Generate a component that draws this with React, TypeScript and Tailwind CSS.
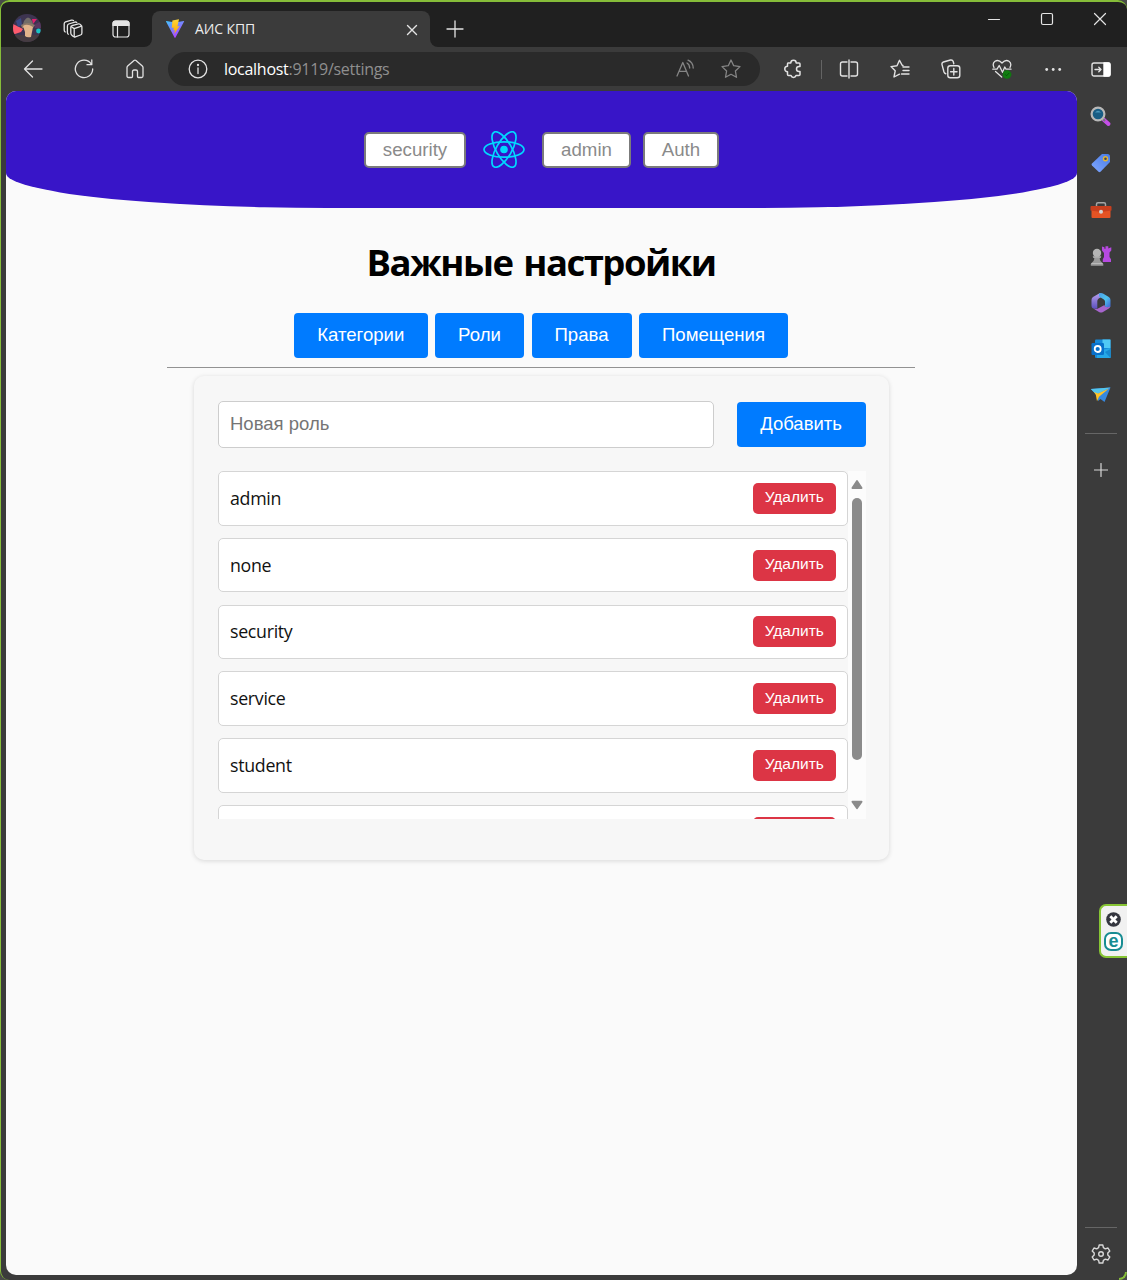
import React from "react";

type IconProps = { children: React.ReactNode; w?: number; h?: number; className?: string; sw?: number };

function Icon({ children, w = 20, h = 20, className = "", sw = 1.2 }: IconProps) {
  return (
    <svg
      width={w}
      height={h}
      viewBox={`0 0 ${w} ${h}`}
      fill="none"
      stroke="currentColor"
      strokeWidth={sw}
      strokeLinecap="round"
      strokeLinejoin="round"
      className={`block shrink-0 ${className}`}
    >
      {children}
    </svg>
  );
}

function Slot({ children }: { children: React.ReactNode }) {
  return <div className="flex h-11 w-[51px] shrink-0 items-center justify-center">{children}</div>;
}

function Avatar() {
  return (
    <svg width="28" height="28" viewBox="0 0 28 28" className="block shrink-0">
      <defs>
        <clipPath id="avatar">
          <circle cx="14" cy="14" r="14" />
        </clipPath>
      </defs>
      <g clipPath="url(#avatar)">
        <rect width="28" height="28" fill="#3d3450" />
        <path d="M0 10L10 15L8 18L2 20L0 20Z" fill="#ff5b6e" />
        <path d="M3 7L8 4L9 11L5 13Z" fill="#3b4a86" />
        <path d="M19 5L24 5L20 10Z" fill="#e0236f" />
        <path d="M21 11L28 7V14L22 14Z" fill="#5a3760" />
        <circle cx="25.5" cy="17" r="2.4" fill="#19c3c5" />
        <path d="M0 21H28V28H0Z" fill="#463c42" />
        <path d="M11 7Q15 0 19 7L21 13H9Z" fill="#716c68" />
        <path d="M8 11Q15 7 22 11L20 14H9Z" fill="#8b7868" />
        <path d="M10 12Q14 9 20 13L19 18L18 23Q14 24 12 22L12 18Z" fill="#e2b58c" />
      </g>
    </svg>
  );
}

function ViteLogo() {
  return (
    <svg width="20" height="20" viewBox="0 0 20 20" className="block shrink-0">
      <defs>
        <linearGradient id="va" x1="0" y1="0" x2="0.6" y2="1">
          <stop offset="0" stopColor="#41c6ff" />
          <stop offset="1" stopColor="#b43cff" />
        </linearGradient>
        <linearGradient id="vb" x1="0" y1="0" x2="0" y2="1">
          <stop offset="0" stopColor="#ffd83a" />
          <stop offset="1" stopColor="#ffa400" />
        </linearGradient>
      </defs>
      <path d="M1 2.5Q.8 2 1.4 2L10 3.6L18.8 2Q19.4 2 19.1 2.6L10.5 18.6Q10 19.3 9.5 18.6Z" fill="url(#va)" />
      <path d="M14 .3L7.4 1.5L6.8 9L8.8 8.6L8.3 11.3L9.9 10.9L9.2 15L14.6 7L12.4 7.4L14 .3Z" fill="url(#vb)" />
    </svg>
  );
}

function ReactLogo() {
  return (
    <svg width="42" height="37" viewBox="-21 -18.5 42 37" fill="none" stroke="#00d8ff" strokeWidth="1.7" className="block shrink-0">
      <circle r="3.8" fill="#00d8ff" stroke="none" />
      <ellipse rx="20" ry="7.7" />
      <ellipse rx="20" ry="7.7" transform="rotate(60)" />
      <ellipse rx="20" ry="7.7" transform="rotate(120)" />
    </svg>
  );
}

function TabStrip() {
  return (
    <div className="flex h-[47px] bg-[#202020] pt-[11px] text-[#e4e4e4]">
      <div className="shrink-0 bg-[#3b3b3b]">
        <div className="flex h-9 w-[152px] rounded-br-lg bg-[#202020] pl-[13px]">
          <div className="mt-[3px] flex h-[28px] items-center">
            <Avatar />
            <Icon className="ml-[22px] mt-px" sw={1.3}>
              <path d="M7.8 8.4Q7.8 7 9 6.7L15.5 4.9Q16.5 4.7 17.2 5.4L18.3 6.5Q18.9 7 18.9 8V14Q18.9 15.6 17.5 16L12.3 17.9Q11.2 18.3 10.3 17.4L8.6 15.9Q7.8 15.2 7.8 14Z" />
              <path d="M8.4 7.8L11.2 9.6L18.4 7.2M11.2 9.6V17.8" />
              <path d="M5.3 15.2Q4.4 14.6 4.4 13.2V7Q4.4 5.5 5.7 5L11.8 3.1Q13 2.8 13.8 3.4" />
              <path d="M2.2 13Q1.2 12.3 1.2 11V4.8Q1.2 3.4 2.5 2.9L8.5 1.2Q9.7 .9 10.5 1.5" />
            </Icon>
            <Icon w={18} h={18} className="ml-[29px] mt-[2px]">
              <rect x="1" y="1" width="16" height="16" rx="2.5" />
              <path d="M1 3.5Q1 1 3.5 1H14.5Q17 1 17 3.5V5.5H1Z" fill="currentColor" />
              <path d="M5.5 6V17" />
            </Icon>
          </div>
        </div>
      </div>
      <div className="flex h-9 w-[278px] items-center rounded-t-lg bg-[#3b3b3b] pb-px pl-[13px] pr-3">
        <ViteLogo />
        <span className="-mt-px ml-[10px] font-['Open_Sans',sans-serif] text-[14px] tracking-[-0.1px] text-[#ececec]">АИС КПП</span>
        <Icon w={12} h={12} sw={1.4} className="ml-auto mt-[2px]">
          <path d="M1.5 1.5L10.5 10.5M10.5 1.5L1.5 10.5" />
        </Icon>
      </div>
      <div className="flex flex-1 bg-[linear-gradient(to_bottom,#202020_50%,#3b3b3b_50%)]">
        <div className="flex flex-1 rounded-bl-lg bg-[#202020]">
          <Icon w={18} h={18} sw={1.3} className="ml-4 mt-[9px]">
            <path d="M9 1V17M1 9H17" />
          </Icon>
          <div className="-mt-1 ml-auto flex h-6 items-center">
            <Icon w={14} h={14} sw={1.2} className="mr-[39px]">
              <path d="M1.5 7.5H12.5" />
            </Icon>
            <Icon w={14} h={14} sw={1.2} className="mr-[39px]">
              <rect x="1.5" y="1.5" width="11" height="11" rx="1.5" />
            </Icon>
            <Icon w={14} h={14} sw={1.2} className="mr-5">
              <path d="M1.5 1.5L12.5 12.5M12.5 1.5L1.5 12.5" />
            </Icon>
          </div>
        </div>
      </div>
    </div>
  );
}

function Toolbar() {
  return (
    <div className="flex h-11 items-center bg-[#3b3b3b] pl-[7px] text-[#e2e2e2]">
      <Slot>
        <Icon sw={1.3}><path d="M19 10H1.5M9.5 2L1.5 10L9.5 18" /></Icon>
      </Slot>
      <Slot>
        <Icon sw={1.3}><path d="M17.2 5A8.7 8.7 0 1 0 18.7 10M17.8 1V5.7H13" /></Icon>
      </Slot>
      <Slot>
        <Icon sw={1.3}>
          <path d="M2 8.5Q2 7.7 2.7 7L9 1.5Q10 .8 11 1.5L17.3 7Q18 7.7 18 8.5V17Q18 18.5 16.5 18.5H13.5Q12.5 18.5 12.5 17.5V12.5Q12.5 11 11 11H9Q7.5 11 7.5 12.5V17.5Q7.5 18.5 6.5 18.5H3.5Q2 18.5 2 17Z" />
        </Icon>
      </Slot>
      <div className="ml-2 flex h-[34px] w-[592px] shrink-0 items-center rounded-full bg-[#2a2a2a] pl-5">
        <Icon sw={1.3}>
          <circle cx="10" cy="10" r="8.8" />
          <path d="M10 9V14.5" /><circle cx="10" cy="6" r=".5" fill="currentColor" />
        </Icon>
        <span className="ml-4 font-['Open_Sans',sans-serif] text-[16px] tracking-[-0.28px] text-[#8f8f8f]">
          <span className="text-white">localhost</span>:9119/settings
        </span>
        <Icon className="ml-auto text-[#858585]" sw={1.3}>
          <path d="M2 17L7.8 3.5L13.5 17M4 12.3H11.5" />
          <path d="M12 4Q14.5 5.3 14.7 9M13 1.2Q18 3.2 18.2 9" />
        </Icon>
        <Icon className="ml-[26px] mr-[19px] text-[#858585]" sw={1.3}>
          <path d="M10 1L12.7 6.7L19 7.6L14.4 12L15.5 18.3L10 15.3L4.5 18.3L5.6 12L1 7.6L7.3 6.7Z" />
        </Icon>
      </div>
      <div className="ml-[7px] flex">
        <Slot>
          <Icon sw={1.5}>
            <path d="M5 4H7.8A2.7 2.7 0 0 1 13.2 4H16Q17 4 17 5V7.5H16A2.5 2.5 0 0 0 16 12.5H17V15.5Q17 16.5 16 16.5H13A2.6 2.6 0 0 1 8 16.5H5.5Q4.5 16.5 4.5 15.5V12.8A2.7 2.7 0 0 1 4.5 7.3V5Q4.5 4 5 4Z" />
          </Icon>
        </Slot>
        <div className="mt-[13px] h-[19px] w-[5px] pl-[3px]"><div className="h-full w-px bg-[#646464]" /></div>
        <Slot>
          <Icon sw={1.4}>
            <path d="M8 3H3.5Q1.5 3 1.5 5V15Q1.5 17 3.5 17H8M12 3H16.5Q18.5 3 18.5 5V15Q18.5 17 16.5 17H12M10 1V19" />
          </Icon>
        </Slot>
        <Slot>
          <Icon sw={1.4}>
            <path d="M13 6.5H12.3L9.5 1.3L7 6.8L1 7.6L5.2 11.8L4 18L9.5 15.2M13 8H19M13 11.5H19M11.5 15H19" />
          </Icon>
        </Slot>
        <Slot>
          <Icon sw={1.4}>
            <rect x="6.8" y="6.8" width="12" height="12" rx="2.5" />
            <path d="M12.8 9.5V16M9.6 12.8H16M4.8 14.7Q3.5 14.4 3 13L1 5.6Q.6 3.6 2.4 3L9.5 1Q11.6.6 12.2 2.5L12.8 4.7" />
          </Icon>
        </Slot>
        <Slot>
          <Icon sw={1.3}>
            <path d="M2 8.5Q0 4.5 3 2.2Q6.5.2 10 4Q13.5.2 17 2.2Q20 4.5 18 8.5" />
            <path d="M.8 10.2H5L7.2 6.5L10.5 13.3L12.8 8L14 10.2H19M3.5 12.5L9.7 18" />
            <circle cx="15" cy="15.5" r="4" fill="#107c10" stroke="#107c10" strokeWidth=".6" />
            <path d="M13.2 15.5L14.5 16.8L17 14.2" stroke="#064f08" strokeWidth=".8" />
          </Icon>
        </Slot>
        <Slot>
          <Icon>
            <g fill="currentColor" stroke="none">
              <circle cx="3.7" cy="10.5" r="1.4" /><circle cx="10.2" cy="10.5" r="1.4" /><circle cx="16.7" cy="10.5" r="1.4" />
            </g>
          </Icon>
        </Slot>
        <div className="flex h-11 w-[46px] items-center justify-center">
          <Icon sw={1.4}>
            <rect x="1" y="4" width="18" height="13" rx="2" />
            <path d="M13 4H17.5Q19 4 19 5.5V15.5Q19 17 17.5 17H13Z" fill="#fff" stroke="#fff" />
            <path d="M4 10.5H10M7.8 8.3L10 10.5L7.8 12.7" />
          </Icon>
        </div>
      </div>
    </div>
  );
}

function PageHeader() {
  return (
    <header className="flex h-[117px] items-center justify-center rounded-b-[30%] bg-[#3815c8] pl-px font-['Liberation_Sans',sans-serif] text-[18.7px] text-[#8a8a8a]">
      <button className="h-9 w-[102px] rounded-[5px] border-2 border-[#7b7b7b] bg-white leading-[30px]">security</button>
      <div className="mx-[17px]"><ReactLogo /></div>
      <button className="h-9 w-[89px] rounded-[5px] border-2 border-[#7b7b7b] bg-white leading-[30px]">admin</button>
      <button className="ml-3 h-9 w-[76px] rounded-[5px] border-2 border-[#7b7b7b] bg-white leading-[30px]">Auth</button>
    </header>
  );
}

const roles = ["admin", "none", "security", "service", "student", ""];

function Roles() {
  return (
    <section className="ml-[188.5px] mt-2 h-[484px] w-[695px] rounded-[10px] bg-[#f7f7f7] px-[23.5px] pt-[25px] shadow-[0_1px_5px_rgba(0,0,0,0.14)]">
      <div className="flex items-center font-['Liberation_Sans',sans-serif] text-[18.5px]">
        <input
          placeholder="Новая роль"
          className="h-[47px] w-[496.5px] rounded-[5px] border border-[#cdcdcd] bg-white px-[11.5px] pb-[2px] placeholder:text-[#757575]"
        />
        <button className="ml-[23px] h-[45px] w-[129px] rounded-[4px] bg-[#007bff] pb-[2px] text-white">Добавить</button>
      </div>
      <div className="mt-[23px] flex h-[348px] overflow-hidden">
        <ul className="w-[630.5px] shrink-0">
          {roles.map((role, i) => (
            <li key={i} className="mb-[12.25px] flex h-[54.5px] items-center justify-between rounded-[5px] border border-[#d5d5d5] bg-white px-[11.5px]">
              <span className="font-['Open_Sans',sans-serif] text-[17.8px] tracking-[-0.3px] text-[#111]">{role}</span>
              <button className="h-[31px] w-[82.5px] rounded-[5px] bg-[#dc3545] pb-[2px] font-['Liberation_Sans',sans-serif] text-[15.5px] leading-5 text-white">
                {role && "Удалить"}
              </button>
            </li>
          ))}
        </ul>
        <div className="flex w-[18px] flex-col items-center bg-[#fcfcfc] pt-2">
          <svg width="12" height="10" viewBox="0 0 12 10" className="shrink-0"><path d="M6 2L10.6 9H1.4Z" fill="#8b8b8b" stroke="#8b8b8b" strokeWidth="1.8" strokeLinejoin="round" /></svg>
          <div className="mt-[9px] h-[262px] w-[10px] shrink-0 rounded-full bg-[#8b8b8b]" />
          <svg width="12" height="10" viewBox="0 0 12 10" className="mt-[40px] shrink-0"><path d="M6 8.3L10.6 1.7H1.4Z" fill="#8b8b8b" stroke="#8b8b8b" strokeWidth="1.8" strokeLinejoin="round" /></svg>
        </div>
      </div>
    </section>
  );
}

function SettingsPage() {
  return (
    <main className="h-[1184px] w-[1071px] overflow-hidden rounded-[10px] bg-[#fafafa]">
      <PageHeader />
      <h1 className="mt-[28px] h-[53px] text-center font-['Open_Sans',sans-serif] text-[36.5px] font-bold leading-[52px] tracking-[-1.55px] text-black [word-spacing:3px]">Важные настройки</h1>
      <nav className="mt-[24px] flex justify-center gap-[7.5px] pb-[9px] font-['Liberation_Sans',sans-serif] text-[18.6px] text-white">
        <button className="h-[45px] w-[133.5px] rounded-[4px] bg-[#007bff] pb-[2px]">Категории</button>
        <button className="h-[45px] w-[89px] rounded-[4px] bg-[#007bff] pb-[2px]">Роли</button>
        <button className="h-[45px] w-[100px] rounded-[4px] bg-[#007bff] pb-[2px]">Права</button>
        <button className="h-[45px] w-[149px] rounded-[4px] bg-[#007bff] pb-[2px]">Помещения</button>
      </nav>
      <hr className="ml-[161.5px] w-[748px] border-[#929292]" />
      <Roles />
    </main>
  );
}

function Sidebar() {
  return (
    <aside className="flex w-[49px] flex-col items-center pt-[15px] text-[#d8d8d8]">
      <div className="flex flex-col gap-[24.4px]">
        <svg width="22" height="22" viewBox="0 0 22 22">
          <path d="M13.5 13.5L18.5 18" stroke="#c54ee8" strokeWidth="4" strokeLinecap="round" />
          <path d="M12.5 12.5L15 15" stroke="#777" strokeWidth="2" />
          <circle cx="8" cy="8" r="6.4" fill="#185d84" stroke="#b8b8b8" strokeWidth="2.2" />
          <path d="M5 6.5Q8 3 11 6.5Z" fill="#4896bc" />
        </svg>
        <svg width="22" height="22" viewBox="0 0 22 22">
          <defs><linearGradient id="tag" x1="0" y1="1" x2="1" y2="0"><stop stopColor="#82a8ff" /><stop offset="1" stopColor="#467be8" /></linearGradient></defs>
          <path d="M12 2H17.5Q20 2 20 4.5V10L10.5 19.8Q9.5 20.7 8.5 19.8L2 13.5Q1 12.5 2 11.5Z" fill="url(#tag)" />
          <circle cx="15.5" cy="6.7" r="2" fill="#3e4360" stroke="#e1b634" strokeWidth="1.4" />
        </svg>
        <svg width="22" height="22" viewBox="0 0 22 22">
          <path d="M6.5 8V5.2Q6.5 3.7 8 3.7H14Q15.5 3.7 15.5 5.2V8" fill="none" stroke="#a5a5a5" strokeWidth="1.5" />
          <rect x="1.5" y="7" width="19" height="12" rx="1" fill="#e45324" />
          <path d="M.5 8Q.5 7 1.5 7H20.5Q21.5 7 21.5 8V11.5L11 13L.5 11.5Z" fill="#c93f1e" />
          <circle cx="11" cy="12.7" r="2" fill="#d2d2d2" />
        </svg>
        <svg width="22" height="22" viewBox="0 0 22 22">
          <path d="M12 1.5L14.4 2.3V3.7H15.5V1.2H18.3V3.4L21.3 2.2V5.5L19.5 7.5V12L21 14.2V17H12.8V14.2L14 12V8L12 5.5Z" fill="#b64ae0" />
          <circle cx="7" cy="8" r="4.2" fill="#b4b4b4" />
          <path d="M2.5 11.5H11.5L9.6 13.5Q9.6 16 13 18.6Q14 20.8 13 20.8H1.3Q.1 20.8 1 18.6Q4.4 16 4.4 13.5Z" fill="#9a9a9a" />
          <path d="M3 12H11M1.5 18.5H12.5" stroke="#bababa" strokeWidth="1" />
        </svg>
        <svg width="22" height="22" viewBox="0 0 22 22">
          <defs>
            <linearGradient id="hexLeft" x1="0" y1="0" x2="0" y2="1"><stop stopColor="#b9a0ee" /><stop offset="1" stopColor="#5b50bd" /></linearGradient>
            <linearGradient id="hexRight" x1="0" y1="0" x2="1" y2="1"><stop stopColor="#4a9fe8" /><stop offset=".5" stopColor="#4fc4ed" /><stop offset="1" stopColor="#3d5fd2" /></linearGradient>
          </defs>
          <path d="M10 1L3 5Q1.5 6 1.5 8V13.5Q1.5 16.8 5 16.8Q8 16.8 7.3 14.5V9Q7.3 7.5 8.7 6.5L14 3.5Z" fill="url(#hexLeft)" />
          <path d="M9 1.6Q11 .4 13 1.6L18.8 5Q20.5 6 20.5 8V14.5Q19.5 16.5 15 14.8V9.5Q15 8 13.5 7.2L9 4.6Z" fill="url(#hexRight)" />
          <path d="M20.4 14.3Q20 15.8 18.8 16.5L13 20Q11 21.2 9 20L3.3 16.6Q6.5 17.5 9 16L14.5 12.9L15 14.8Q18 16 20.4 14.3Z" fill="#a665cc" />
        </svg>
        <svg width="22" height="22" viewBox="0 0 22 22">
          <rect x="5" y="1.5" width="15.5" height="18.5" rx="1" fill="#1689da" />
          <path d="M12.5 1.5H20.5V10H12.5Z" fill="#50c9f5" /><path d="M7 13L20.5 10V20H7Z" fill="#25a7e7" /><path d="M15 14L20.5 11V20Z" fill="#1688cf" />
          <rect x="1.5" y="5" width="12.5" height="12" rx="1.2" fill="#0870ca" />
          <circle cx="7.7" cy="11" r="3" fill="none" stroke="#fff" strokeWidth="1.8" />
        </svg>
        <svg width="22" height="22" viewBox="0 0 22 22">
          <path d="M.8 5L20.5 3.5L14.5 18L10.5 15L8 17L7 11Z" fill="#3688df" />
          <path d="M.8 5L20.5 3.5L6 10.5Z" fill="#53c6ee" />
          <path d="M4 8L8 9.5L19 4.5L9 12.8L7 17.2L5.8 10.8Z" fill="#ffc225" />
        </svg>
      </div>
      <div className="mt-[27px] h-px w-8 bg-[#666]" />
      <Icon w={14} h={14} className="mt-[29px]" sw={1.2}><path d="M7 .5V13.5M.5 7H13.5" /></Icon>
      <div className="mt-[750px] h-px w-8 bg-[#666]" />
      <svg width="20" height="20" viewBox="0 0 20 20" fill="none" stroke="currentColor" strokeWidth="1.4" strokeLinejoin="round" className="mt-4 shrink-0">
        <path d="M8.2 1H11.8L12.4 3.7L14.3 4.8L17 4L18.8 7.1L16.8 9V11L18.8 12.9L17 16L14.3 15.2L12.4 16.3L11.8 19H8.2L7.6 16.3L5.7 15.2L3 16L1.2 12.9L3.2 11V9L1.2 7.1L3 4L5.7 4.8L7.6 3.7Z" />
        <circle cx="10" cy="10" r="2.3" />
      </svg>
    </aside>
  );
}

function EsetBadge() {
  return (
    <div className="absolute right-0 top-[904px] flex h-[54px] w-7 flex-col items-center gap-[5px] rounded-l-[7px] border-2 border-r-0 border-[#87c534] bg-[#f1f1f1] pr-px pt-[6px]">
      <svg width="15" height="15" viewBox="0 0 15 15" className="shrink-0"><circle cx="7.5" cy="7.5" r="7.3" fill="#34363f" /><path d="M4.3 4.3L10.7 10.7M10.7 4.3L4.3 10.7" stroke="#fff" strokeWidth="2.8" /></svg>
      <div className="flex h-[19px] w-[19px] shrink-0 items-center justify-center rounded-[7px] border-2 border-[#178c92] bg-white pb-[2px] font-['Liberation_Sans',sans-serif] text-[18px] font-bold leading-none text-[#178c92]">e</div>
    </div>
  );
}

export default function App() {
  return (
    <div className="relative h-[1280px] w-[1127px] overflow-hidden bg-[#3b3b3b]">
      <TabStrip />
      <Toolbar />
      <div className="flex pl-[5.5px]">
        <SettingsPage />
        <Sidebar />
      </div>
      <EsetBadge />
      <div className="pointer-events-none absolute inset-0 rounded-[9px] border border-t-2 border-r-0 border-b-0 border-[#86bd39] shadow-[0_0_0_9px_#4a4b4a]" />
      <div className="pointer-events-none absolute bottom-0 right-0 h-2 w-2 rounded-br-lg border-b-2 border-r-2 border-[#86bd39]" />
    </div>
  );
}
